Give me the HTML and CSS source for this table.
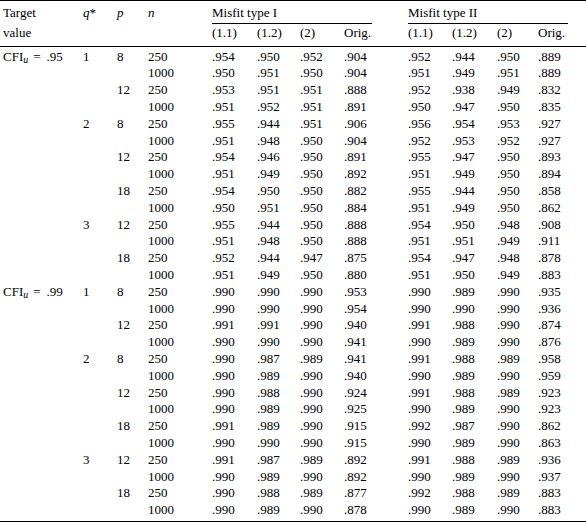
FILE: index.html
```html
<!DOCTYPE html>
<html lang="en">
<head>
    <meta charset="UTF-8">
    <meta name="viewport" content="width=device-width, initial-scale=1.0">
    <title>Misfit results</title>
    <link rel="stylesheet" href="styles.css">
</head>
<body>
    <table class="results">
        <colgroup>
            <col class="c-target"><col class="c-q"><col class="c-p"><col class="c-n">
            <col class="c-a"><col class="c-b"><col class="c-c"><col class="c-orig">
            <col class="c-a2"><col class="c-b2"><col class="c-c2"><col class="c-orig2">
        </colgroup>
        <thead>
            <tr class="head-top">
                <th class="first">Target</th>
                <th><i>q</i>*</th>
                <th><i>p</i></th>
                <th><i>n</i></th>
                <th colspan="4"><span class="group-label">Misfit type I</span></th>
                <th colspan="4"><span class="group-label">Misfit type II</span></th>
            </tr>
            <tr class="head-sub">
                <th class="first">value</th>
                <th></th><th></th><th></th>
                <th>(1.1)</th><th>(1.2)</th><th>(2)</th><th>Orig.</th>
                <th>(1.1)</th><th>(1.2)</th><th>(2)</th><th>Orig.</th>
            </tr>
        </thead>
        <tbody>
            <tr class="row-first"><td class="first">CFI<sub>u</sub><span class="eq">=</span>.95</td><td>1</td><td>8</td><td>250</td><td>.954</td><td>.950</td><td>.952</td><td>.904</td><td>.952</td><td>.944</td><td>.950</td><td>.889</td></tr>
            <tr><td class="first"></td><td></td><td></td><td>1000</td><td>.950</td><td>.951</td><td>.950</td><td>.904</td><td>.951</td><td>.949</td><td>.951</td><td>.889</td></tr>
            <tr><td class="first"></td><td></td><td>12</td><td>250</td><td>.953</td><td>.951</td><td>.951</td><td>.888</td><td>.952</td><td>.938</td><td>.949</td><td>.832</td></tr>
            <tr><td class="first"></td><td></td><td></td><td>1000</td><td>.951</td><td>.952</td><td>.951</td><td>.891</td><td>.950</td><td>.947</td><td>.950</td><td>.835</td></tr>
            <tr><td class="first"></td><td>2</td><td>8</td><td>250</td><td>.955</td><td>.944</td><td>.951</td><td>.906</td><td>.956</td><td>.954</td><td>.953</td><td>.927</td></tr>
            <tr><td class="first"></td><td></td><td></td><td>1000</td><td>.951</td><td>.948</td><td>.950</td><td>.904</td><td>.952</td><td>.953</td><td>.952</td><td>.927</td></tr>
            <tr><td class="first"></td><td></td><td>12</td><td>250</td><td>.954</td><td>.946</td><td>.950</td><td>.891</td><td>.955</td><td>.947</td><td>.950</td><td>.893</td></tr>
            <tr><td class="first"></td><td></td><td></td><td>1000</td><td>.951</td><td>.949</td><td>.950</td><td>.892</td><td>.951</td><td>.949</td><td>.950</td><td>.894</td></tr>
            <tr><td class="first"></td><td></td><td>18</td><td>250</td><td>.954</td><td>.950</td><td>.950</td><td>.882</td><td>.955</td><td>.944</td><td>.950</td><td>.858</td></tr>
            <tr><td class="first"></td><td></td><td></td><td>1000</td><td>.950</td><td>.951</td><td>.950</td><td>.884</td><td>.951</td><td>.949</td><td>.950</td><td>.862</td></tr>
            <tr><td class="first"></td><td>3</td><td>12</td><td>250</td><td>.955</td><td>.944</td><td>.950</td><td>.888</td><td>.954</td><td>.950</td><td>.948</td><td>.908</td></tr>
            <tr><td class="first"></td><td></td><td></td><td>1000</td><td>.951</td><td>.948</td><td>.950</td><td>.888</td><td>.951</td><td>.951</td><td>.949</td><td>.911</td></tr>
            <tr><td class="first"></td><td></td><td>18</td><td>250</td><td>.952</td><td>.944</td><td>.947</td><td>.875</td><td>.954</td><td>.947</td><td>.948</td><td>.878</td></tr>
            <tr><td class="first"></td><td></td><td></td><td>1000</td><td>.951</td><td>.949</td><td>.950</td><td>.880</td><td>.951</td><td>.950</td><td>.949</td><td>.883</td></tr>

            <tr><td class="first">CFI<sub>u</sub><span class="eq">=</span>.99</td><td>1</td><td>8</td><td>250</td><td>.990</td><td>.990</td><td>.990</td><td>.953</td><td>.990</td><td>.989</td><td>.990</td><td>.935</td></tr>
            <tr><td class="first"></td><td></td><td></td><td>1000</td><td>.990</td><td>.990</td><td>.990</td><td>.954</td><td>.990</td><td>.990</td><td>.990</td><td>.936</td></tr>
            <tr><td class="first"></td><td></td><td>12</td><td>250</td><td>.991</td><td>.991</td><td>.990</td><td>.940</td><td>.991</td><td>.988</td><td>.990</td><td>.874</td></tr>
            <tr><td class="first"></td><td></td><td></td><td>1000</td><td>.990</td><td>.990</td><td>.990</td><td>.941</td><td>.990</td><td>.989</td><td>.990</td><td>.876</td></tr>
            <tr><td class="first"></td><td>2</td><td>8</td><td>250</td><td>.990</td><td>.987</td><td>.989</td><td>.941</td><td>.991</td><td>.988</td><td>.989</td><td>.958</td></tr>
            <tr><td class="first"></td><td></td><td></td><td>1000</td><td>.990</td><td>.989</td><td>.990</td><td>.940</td><td>.990</td><td>.989</td><td>.990</td><td>.959</td></tr>
            <tr><td class="first"></td><td></td><td>12</td><td>250</td><td>.990</td><td>.988</td><td>.990</td><td>.924</td><td>.991</td><td>.988</td><td>.989</td><td>.923</td></tr>
            <tr><td class="first"></td><td></td><td></td><td>1000</td><td>.990</td><td>.989</td><td>.990</td><td>.925</td><td>.990</td><td>.989</td><td>.990</td><td>.923</td></tr>
            <tr><td class="first"></td><td></td><td>18</td><td>250</td><td>.991</td><td>.989</td><td>.990</td><td>.915</td><td>.992</td><td>.987</td><td>.990</td><td>.862</td></tr>
            <tr><td class="first"></td><td></td><td></td><td>1000</td><td>.990</td><td>.990</td><td>.990</td><td>.915</td><td>.990</td><td>.989</td><td>.990</td><td>.863</td></tr>
            <tr><td class="first"></td><td>3</td><td>12</td><td>250</td><td>.991</td><td>.987</td><td>.989</td><td>.892</td><td>.991</td><td>.988</td><td>.989</td><td>.936</td></tr>
            <tr><td class="first"></td><td></td><td></td><td>1000</td><td>.990</td><td>.989</td><td>.990</td><td>.892</td><td>.990</td><td>.989</td><td>.990</td><td>.937</td></tr>
            <tr><td class="first"></td><td></td><td>18</td><td>250</td><td>.990</td><td>.988</td><td>.989</td><td>.877</td><td>.992</td><td>.988</td><td>.989</td><td>.883</td></tr>
            <tr class="row-last"><td class="first"></td><td></td><td></td><td>1000</td><td>.990</td><td>.989</td><td>.990</td><td>.878</td><td>.990</td><td>.989</td><td>.990</td><td>.883</td></tr>
        </tbody>
    </table>
</body>
</html>
```

FILE: styles.css
```css
/* General Reset */
body, html {
    margin: 0;
    padding: 0;
    background-color: #FFFFFF;
    color: #000000;
}

/* Table layout */
.results {
    width: 586px;
    table-layout: fixed;
    border-collapse: collapse;
    font-family: "Liberation Serif", "Times New Roman", serif;
    font-size: 13px;
}

.c-target { width: 83px; }
.c-q { width: 34px; }
.c-p { width: 31px; }
.c-n { width: 64px; }
.c-a { width: 45px; }
.c-b { width: 43px; }
.c-c { width: 44px; }
.c-orig { width: 64px; }
.c-a2 { width: 44px; }
.c-b2 { width: 45px; }
.c-c2 { width: 41px; }
.c-orig2 { width: 48px; }

.results th,
.results td {
    padding: 0;
    text-align: left;
    font-weight: normal;
    line-height: 16.8px;
    white-space: nowrap;
    vertical-align: top;
}

.results .first {
    padding-left: 3px;
}

/* Header rules */
.results thead {
    border-top: 1px solid #000;
}

.head-top th {
    padding-top: 4px;
}

.head-sub th {
    padding-top: 1px;
    padding-bottom: 4px;
}

.results thead .head-sub {
    border-bottom: 1px solid #000;
}

.group-label {
    display: block;
    width: 160px;
    padding-bottom: 1px;
    border-bottom: 1px solid #000;
}

/* Body rows */
.row-first td {
    padding-top: 2px;
}

.row-last td {
    padding-bottom: 2px;
}

.results tbody {
    border-bottom: 1px solid #000;
}

sub {
    font-style: italic;
    font-size: 10px;
    line-height: 0;
    vertical-align: -2px;
}

.eq {
    margin: 0 6px 0 5px;
}
```
